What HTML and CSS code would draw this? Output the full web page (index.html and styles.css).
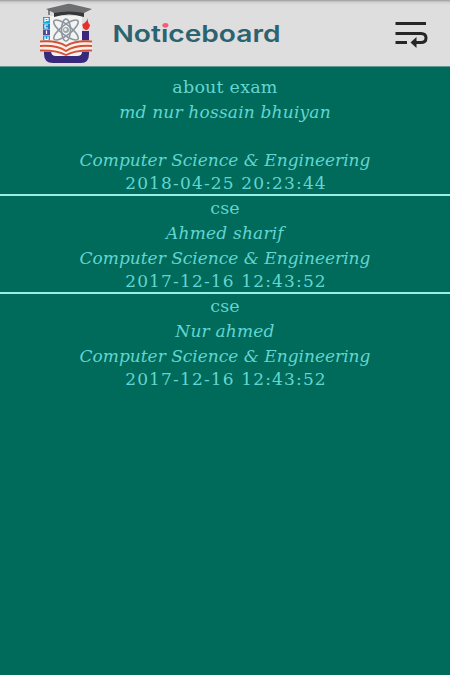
FILE: index.html
```html
<!DOCTYPE html>
<html lang="en">
<head>
<meta charset="utf-8">
<title>Noticeboard</title>
<link rel="stylesheet" href="styles.css">
</head>
<body>
<header class="bar">
  <svg class="crest" width="56" height="62" viewBox="0 0 56 62" aria-hidden="true">
    <path d="M11 13H43V56H11Z" fill="#f3f3f4"/>
    <path d="M5 44V51Q5 60 14 60H42Q50 60 50 51V28H43V49Q43 53 38 53H17Q12 53 12 48V44Z" fill="#39297b"/>
    <path d="M4 14H11V20H4Z" fill="#18a9df"/><path d="M4 20.500H11V26H4Z" fill="#1585c5"/><path d="M4 26.500H11V32H4Z" fill="#554798"/><path d="M4 32.500H11V38H4Z" fill="#199bd3"/>
    <g fill="none" stroke="#fff" stroke-width="1.200"><path d="M6 19V15.500H9V17.500H6M9 22H6V25H9M7.500 27.500V31M6 33.500V36.500H9V33.500"/></g>
    <g fill="none" stroke="#8c989e" stroke-width="1.600"><ellipse cx="27" cy="27" rx="15" ry="5" transform="rotate(38 27 27)"/><ellipse cx="27" cy="27" rx="15" ry="5" transform="rotate(-38 27 27)"/><ellipse cx="27" cy="27" rx="11" ry="4.500" transform="rotate(90 27 27)"/></g>
    <circle cx="27" cy="27" r="3" fill="#9aa4a9"/><circle cx="26.500" cy="26.500" r="1.500" fill="#e9eeee"/>
    <path d="M15 8H45V14Q30 9 15 14Z" fill="#353739"/>
    <path d="M7 6L28 1Q30 .5 32 1L53 6L45 10Q30 7 15 10Z" fill="#6c6e70"/>
    <path d="M10 7V12" stroke="#444" stroke-width="1.200"/>
    <path d="M49 15Q48 19 51 22Q50 27 47 27Q43 26 43.500 21Q47 20 49 15Z" fill="#e92f2b"/>
    <path d="M1 37.500Q18 36 27 42Q36 36 53 37.500V48.500Q36 48 27 53Q18 48 1 48.500Z" fill="#fff1e9"/>
    <g fill="none" stroke="#d35136" stroke-width="2"><path d="M1 38.500Q18 37 27 43Q36 37 53 38.500M1 43Q18 42 27 48Q36 42 53 43M1 47.500Q18 47 27 52Q36 47 53 47.500"/></g>
  </svg>
  <svg class="wordmark" width="174" height="30" viewBox="0 0 174 30">
    <text class="word" x="-.5" y="22.500" textLength="168" lengthAdjust="spacingAndGlyphs">Noticeboard</text>
    <ellipse cx="52.500" cy="6.300" rx="2.900" ry="2.400" fill="#ff5878"/>
  </svg>
  <svg class="menu" width="34" height="28" viewBox="0 0 34 28" aria-label="Menu">
    <g fill="none" stroke="#262626" stroke-width="3"><path d="M.5 3.500H31M.5 13.500H26Q31 13.500 31 18Q31 22.500 26 22.500H20M.5 22.500H12"/></g>
    <path d="M15.500 22.500L21.500 17V28Z" fill="#262626"/>
  </svg>
</header>
<main class="list">
  <article class="notice">
    <p class="subject">about exam</p>
    <p class="author first">md nur hossain bhuiyan</p>
    <p class="dept">Computer Science &amp; Engineering</p>
    <p class="date">2018-04-25 20:23:44</p>
  </article>
  <article class="notice">
    <p class="subject">cse</p>
    <p class="author">Ahmed sharif</p>
    <p class="dept">Computer Science &amp; Engineering</p>
    <p class="date">2017-12-16 12:43:52</p>
  </article>
  <article class="notice">
    <p class="subject">cse</p>
    <p class="author">Nur ahmed</p>
    <p class="dept">Computer Science &amp; Engineering</p>
    <p class="date">2017-12-16 12:43:52</p>
  </article>
</main>
</body>
</html>
```
FILE: styles.css
```css
body {
  margin: 0;
  min-height: 675px;
  background: #006a5b;
  color: #62d6d0;
  font-family: "DejaVu Serif", serif;
  font-size: 17px;
}
.bar {
  box-sizing: border-box;
  height: 67px;
  display: flex;
  align-items: flex-start;
  padding: 3px 21px 0 39px;
  background: linear-gradient(#999 0, #cfcfcf 2px, #dedede 5px);
  border-bottom: 1px solid #5f9990;
}
.wordmark {
  margin: 16px 0 0 18px;
}
.word {
  font: 570 23px Inter, sans-serif;
  fill: #2b6371;
}
.menu {
  margin: 17px 0 0 auto;
}
.list {
  padding-top: 8px;
}
.notice {
  text-align: center;
  white-space: nowrap;
}
.notice + .notice {
  border-top: 2px solid #9beee5;
}
.notice p {
  margin: 0;
}
.subject {
  height: 24px;
  line-height: 24px;
  font-size: 17.5px;
  letter-spacing: 0.2px;
}
.author {
  height: 26px;
  line-height: 26px;
  font-style: italic;
  letter-spacing: 0.2px;
}
.author.first {
  height: 49px;
}
.dept {
  height: 24px;
  line-height: 24px;
  font-style: italic;
}
.notice .date {
  height: 22px;
  line-height: 22px;
  letter-spacing: 1.15px;
  padding-left: 2px;
}
```
